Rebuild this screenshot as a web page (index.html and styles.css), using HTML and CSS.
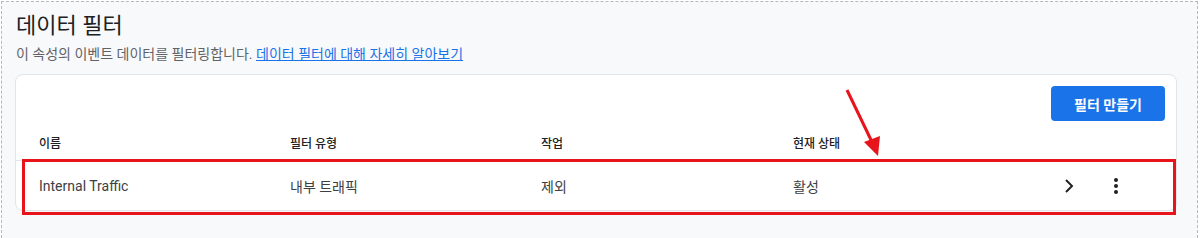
FILE: index.html
```html
<!DOCTYPE html>
<html lang="ko">
<head>
  <meta charset="UTF-8" />
  <title>데이터 필터</title>
  <link rel="stylesheet" href="styles.css">
</head>
<body>
  <div class="page">
    <h1>데이터 필터</h1>
    <p class="desc">이 속성의 이벤트 데이터를 필터링합니다. <a href="#">데이터 필터에 대해 자세히 알아보기</a></p>

    <div class="card">
      <div class="toolbar">
        <button class="create-btn">필터 만들기</button>
      </div>

      <div class="row head">
        <span>이름</span>
        <span>필터 유형</span>
        <span>작업</span>
        <span>현재 상태</span>
        <span></span>
      </div>

      <div class="row item">
        <span>Internal Traffic</span>
        <span>내부 트래픽</span>
        <span>제외</span>
        <span>활성</span>
        <span class="actions">
          <svg width="24" height="24" viewBox="0 0 24 24"><path d="M9.3 6.7 10.7 5.3 17.4 12l-6.7 6.7-1.4-1.4L14.6 12z" fill="#202124"/></svg>
          <svg width="24" height="24" viewBox="0 0 24 24"><circle cx="12" cy="6" r="2" fill="#202124"/><circle cx="12" cy="12" r="2" fill="#202124"/><circle cx="12" cy="18" r="2" fill="#202124"/></svg>
        </span>
        <div class="highlight"></div>
      </div>
    </div>

    <!-- annotation arrow -->
    <svg class="arrow" width="60" height="80" viewBox="0 0 60 80">
      <line x1="5" y1="6" x2="30" y2="58" stroke="#e8141c" stroke-width="3"/>
      <polygon points="22,58 38,52 36,72" fill="#e8141c"/>
    </svg>
  </div>
</body>
</html>
```

FILE: styles.css
```css
body {
  margin: 0;
  font-family: Roboto, "Noto Sans CJK KR", sans-serif;
  color: #202124;
}

.page {
  position: relative;
  margin: 1px 2px 0 1px;
  height: 232px;
  padding: 8px 20px 0 13px;
  border: 1px dashed #b8b8b8;
  background: #f8f9fa;
}

h1 {
  margin: 0 0 0 1px;
  font-size: 22px;
  font-weight: 400;
  line-height: 32px;
}

.desc {
  margin: 2px 0 0 1px;
  font-size: 14px;
  line-height: 20px;
  color: #5f6368;
}

.desc a {
  color: #1a73e8;
}

.card {
  margin-top: 10px;
  height: 135px;
  background: #fff;
  border: 1px solid #e3e5e8;
  border-radius: 8px;
}

.toolbar {
  display: flex;
  justify-content: flex-end;
  padding: 11px 11px 0 0;
}

.create-btn {
  width: 114px;
  height: 35px;
  border: none;
  border-radius: 4px;
  background: #1a73e8;
  color: #fff;
  font-family: Roboto, "Noto Sans CJK KR", sans-serif;
  font-size: 14px;
  font-weight: 700;
}

.row {
  position: relative;
  display: grid;
  grid-template-columns: 251px 251px 252px 251px 1fr;
  align-items: center;
  padding-left: 23px;
}

.row.head {
  height: 38px;
  margin-top: 1px;
  font-size: 12px;
  font-weight: 500;
  border-bottom: 1px solid #e3e5e8;
}

.row.head span {
  padding-top: 2px;
}

.row.item {
  height: 50px;
  font-size: 14px;
  color: #3c4043;
}

.actions {
  display: flex;
  gap: 24px;
  padding-left: 12px;
}

.highlight {
  position: absolute;
  left: 6px;
  top: -2px;
  right: 0;
  bottom: -4px;
  border: 3px solid #e8141c;
}

.arrow {
  position: absolute;
  left: 840px;
  top: 82px;
}
```
